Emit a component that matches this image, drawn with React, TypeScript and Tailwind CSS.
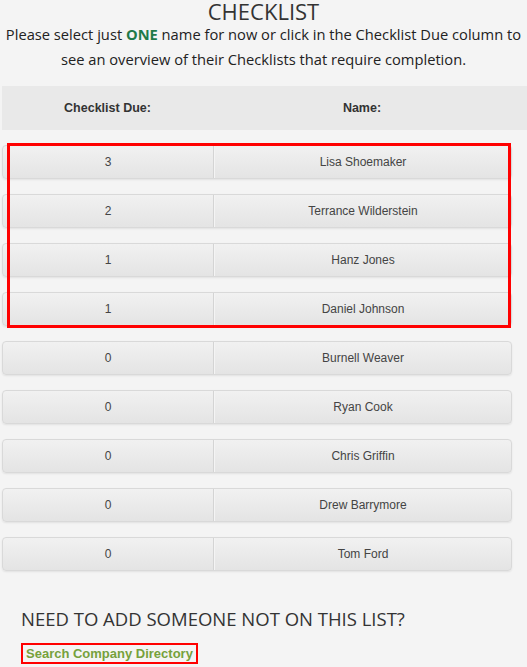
import React from 'react'

const people = [
  { due: 3, name: 'Lisa Shoemaker' },
  { due: 2, name: 'Terrance Wilderstein' },
  { due: 1, name: 'Hanz Jones' },
  { due: 1, name: 'Daniel Johnson' },
  { due: 0, name: 'Burnell Weaver' },
  { due: 0, name: 'Ryan Cook' },
  { due: 0, name: 'Chris Griffin' },
  { due: 0, name: 'Drew Barrymore' },
  { due: 0, name: 'Tom Ford' },
]

function Row({ due, name }: { due: number; name: string }) {
  return (
    <div className="flex h-[34px] ml-[2px] w-[510px] rounded-[4px] border border-[#d9d9d9] bg-gradient-to-b from-[#f1f1f1] to-[#e4e4e4] shadow-[0_1px_2px_rgba(0,0,0,0.08)] text-[12px] text-[#444]">
      <div className="w-[211px] flex items-center justify-center border-r border-[#d4d4d4]">{due}</div>
      <div className="flex-1 flex items-center justify-center border-l border-[#f4f4f4]">{name}</div>
    </div>
  )
}

export default function App() {
  const flagged = people.slice(0, 4)
  const rest = people.slice(4)

  return (
    <div className="min-h-[667px] w-full bg-[#f4f4f4] text-[#333] font-['Liberation_Sans',Arial,sans-serif]">
      <h1 className="text-center text-[22px] leading-[22px] font-['Open_Sans',sans-serif] text-[#333]">
        CHECKLIST
      </h1>
      <p className="text-center text-[14.7px] leading-[25px] font-['Open_Sans',sans-serif] text-[#222] px-1">
        Please select just <span className="font-bold text-[#1f7a4a]">ONE</span> name for now or click in the Checklist Due column to see an overview of their Checklists that require completion.
      </p>

      <div className="mt-[14px] ml-[2px] h-[44px] bg-[#e9e9e9] flex text-[12.5px] font-bold text-[#333]">
        <div className="w-[211px] flex items-center justify-center">Checklist Due:</div>
        <div className="w-[298px] flex items-center justify-center">Name:</div>
      </div>

      <div className="mt-[15px] flex flex-col gap-[15px]">
        <div className="relative flex flex-col gap-[15px]">
          {flagged.map((p) => (
            <Row key={p.name} {...p} />
          ))}
          <div className="absolute left-[7px] top-[-2px] w-[504px] h-[185px] border-[3px] border-[#ff0000] pointer-events-none" />
        </div>
        {rest.map((p) => (
          <Row key={p.name} {...p} />
        ))}
      </div>

      <h2 className="mt-[36px] ml-[21px] text-[18.5px] leading-[24px] font-['Open_Sans',sans-serif] text-[#333]">
        NEED TO ADD SOMEONE NOT ON THIS LIST?
      </h2>
      <div className="mt-[10px] ml-[21px]">
        <a href="#" className="inline-block border-[2px] border-[#ff0000] px-[3px] text-[13px] leading-[17px] font-bold text-[#76a13c]">
          Search Company Directory
        </a>
      </div>
    </div>
  )
}
